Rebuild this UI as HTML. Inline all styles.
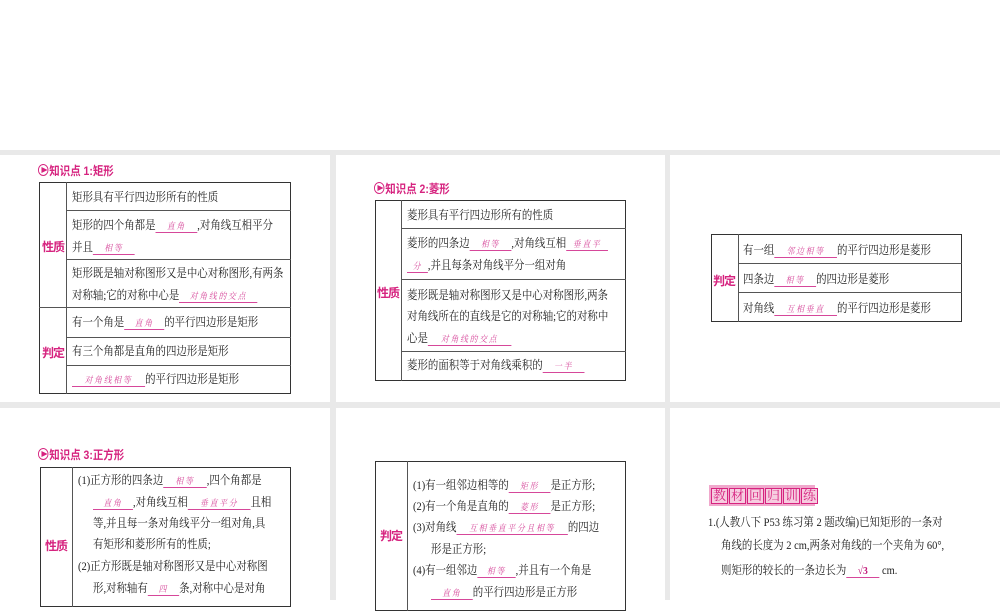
<!DOCTYPE html>
<html><head><meta charset="utf-8"><style>
body{margin:0;width:1000px;height:600px;overflow:hidden;background:#fff;font-family:"Liberation Serif","Noto Serif CJK SC",serif;color:#222;font-size:12px;position:relative}
.bg{position:absolute;left:0;top:150px;width:1000px;height:450px;background:#e9e9e9}
.p{position:absolute;background:#fff}
.box{position:absolute;border:1px solid #333;box-sizing:border-box}
.h{position:absolute;height:1px;background:#555}
.v{position:absolute;width:1px;background:#555}
.t{position:absolute;white-space:nowrap;line-height:14px;font-size:12px;transform:scaleX(0.87);transform-origin:0 0}
.lab{position:absolute;color:#d6237f;font-family:"Liberation Sans","Noto Sans CJK SC",sans-serif;font-weight:bold;font-size:12px;letter-spacing:-1px}
.hd{position:absolute;color:#d6237f;font-family:"Liberation Sans","Noto Sans CJK SC",sans-serif;font-weight:bold;font-size:12px;white-space:nowrap;transform:scaleX(0.87);transform-origin:0 0}
.hd i{display:inline-block;width:12px;height:12px;border-radius:50%;border:1px solid #d6237f;box-sizing:border-box;position:relative;vertical-align:-1px;margin-right:1px}
.hd i:after{content:"";position:absolute;left:3px;top:2px;border-left:7px solid #d6237f;border-top:3.5px solid transparent;border-bottom:3.5px solid transparent}
.a{display:inline-block;border-bottom:1px solid #d6479a;color:#d6479a;font-size:9px;text-align:center;letter-spacing:2px;font-style:italic;line-height:12px}
</style></head><body>
<div class="bg"></div>
<div class="p" style="left:0;top:155px;width:330px;height:247px"></div>
<div class="p" style="left:336px;top:155px;width:329px;height:247px"></div>
<div class="p" style="left:670px;top:155px;width:330px;height:247px"></div>
<div class="p" style="left:0;top:408px;width:330px;height:192px"></div>
<div class="p" style="left:336px;top:408px;width:329px;height:192px"></div>
<div class="p" style="left:670px;top:408px;width:330px;height:192px"></div>

<!-- T1 -->
<div class="hd" style="left:38px;top:162px"><i></i>知识点 1:矩形</div>
<div class="box" style="left:39px;top:182px;width:252px;height:212px"></div>
<div class="v" style="left:66px;top:182px;height:212px"></div>
<div class="h" style="left:66px;top:210px;width:225px"></div>
<div class="h" style="left:66px;top:259px;width:225px"></div>
<div class="h" style="left:39px;top:307px;width:252px"></div>
<div class="h" style="left:66px;top:337px;width:225px"></div>
<div class="h" style="left:66px;top:365px;width:225px"></div>
<div class="lab" style="left:42px;top:238px">性质</div>
<div class="lab" style="left:42px;top:344px">判定</div>
<div class="t" style="left:72px;top:190px">矩形具有平行四边形所有的性质</div>
<div class="t" style="left:72px;top:218px">矩形的四个角都是<span class="a" style="width:48px">直角</span>,对角线互相平分</div>
<div class="t" style="left:72px;top:240px">并且<span class="a" style="width:48px">相等</span></div>
<div class="t" style="left:72px;top:266px">矩形既是轴对称图形又是中心对称图形,有两条</div>
<div class="t" style="left:72px;top:288px">对称轴;它的对称中心是<span class="a" style="width:90px">对角线的交点</span></div>
<div class="t" style="left:72px;top:315px">有一个角是<span class="a" style="width:46px">直角</span>的平行四边形是矩形</div>
<div class="t" style="left:72px;top:344px">有三个角都是直角的四边形是矩形</div>
<div class="t" style="left:72px;top:372px"><span class="a" style="width:84px">对角线相等</span>的平行四边形是矩形</div>

<!-- T2 -->
<div class="hd" style="left:374px;top:180px"><i></i>知识点 2:菱形</div>
<div class="box" style="left:375px;top:200px;width:251px;height:181px"></div>
<div class="v" style="left:401px;top:200px;height:181px"></div>
<div class="h" style="left:401px;top:228px;width:225px"></div>
<div class="h" style="left:401px;top:279px;width:225px"></div>
<div class="h" style="left:401px;top:351px;width:225px"></div>
<div class="lab" style="left:377px;top:284px">性质</div>
<div class="t" style="left:407px;top:208px">菱形具有平行四边形所有的性质</div>
<div class="t" style="left:407px;top:236px">菱形的四条边<span class="a" style="width:48px">相等</span>,对角线互相<span class="a" style="width:48px">垂直平</span></div>
<div class="t" style="left:407px;top:258px"><span class="a" style="width:24px">分</span>,并且每条对角线平分一组对角</div>
<div class="t" style="left:407px;top:288px">菱形既是轴对称图形又是中心对称图形,两条</div>
<div class="t" style="left:407px;top:309px">对角线所在的直线是它的对称轴;它的对称中</div>
<div class="t" style="left:407px;top:331px">心是<span class="a" style="width:96px">对角线的交点</span></div>
<div class="t" style="left:407px;top:358px">菱形的面积等于对角线乘积的<span class="a" style="width:48px">一半</span></div>

<!-- T3 -->
<div class="box" style="left:711px;top:234px;width:251px;height:88px"></div>
<div class="v" style="left:738px;top:234px;height:88px"></div>
<div class="h" style="left:738px;top:263px;width:224px"></div>
<div class="h" style="left:738px;top:292px;width:224px"></div>
<div class="lab" style="left:713px;top:272px">判定</div>
<div class="t" style="left:743px;top:243px">有一组<span class="a" style="width:72px">邻边相等</span>的平行四边形是菱形</div>
<div class="t" style="left:743px;top:272px">四条边<span class="a" style="width:48px">相等</span>的四边形是菱形</div>
<div class="t" style="left:743px;top:301px">对角线<span class="a" style="width:72px">互相垂直</span>的平行四边形是菱形</div>

<!-- T4 -->
<div class="hd" style="left:38px;top:446px"><i></i>知识点 3:正方形</div>
<div class="box" style="left:40px;top:467px;width:251px;height:140px"></div>
<div class="v" style="left:72px;top:467px;height:140px"></div>
<div class="lab" style="left:45px;top:537px">性质</div>
<div class="t" style="left:78px;top:473px">(1)正方形的四条边<span class="a" style="width:50px">相等</span>,四个角都是</div>
<div class="t" style="left:93px;top:495px"><span class="a" style="width:46px">直角</span>,对角线互相<span class="a" style="width:72px">垂直平分</span>且相</div>
<div class="t" style="left:93px;top:516px">等,并且每一条对角线平分一组对角,具</div>
<div class="t" style="left:93px;top:537px">有矩形和菱形所有的性质;</div>
<div class="t" style="left:78px;top:559px">(2)正方形既是轴对称图形又是中心对称图</div>
<div class="t" style="left:93px;top:581px">形,对称轴有<span class="a" style="width:36px">四</span>条,对称中心是对角</div>

<!-- T5 -->
<div class="box" style="left:375px;top:461px;width:251px;height:150px"></div>
<div class="v" style="left:407px;top:461px;height:150px"></div>
<div class="lab" style="left:380px;top:527px">判定</div>
<div class="t" style="left:413px;top:478px">(1)有一组邻边相等的<span class="a" style="width:48px">矩形</span>是正方形;</div>
<div class="t" style="left:413px;top:499px">(2)有一个角是直角的<span class="a" style="width:48px">菱形</span>是正方形;</div>
<div class="t" style="left:413px;top:520px">(3)对角线<span class="a" style="width:128px">互相垂直平分且相等</span>的四边</div>
<div class="t" style="left:431px;top:542px">形是正方形;</div>
<div class="t" style="left:413px;top:563px">(4)有一组邻边<span class="a" style="width:44px">相等</span>,并且有一个角是</div>
<div class="t" style="left:431px;top:585px"><span class="a" style="width:48px">直角</span>的平行四边形是正方形</div>

<!-- section -->
<div style="position:absolute;left:709px;top:485px;width:106px;height:21px;background:#f0a8cc"></div>
<div style="position:absolute;left:711px;top:488px;font-size:13px;line-height:14px;color:#d6237f;white-space:nowrap">
<span style="display:inline-block;width:15px;border:1px solid #d6237f;margin-right:1px;text-align:center;background:#f6cde0">教</span><span style="display:inline-block;width:15px;border:1px solid #d6237f;margin-right:1px;text-align:center;background:#f6cde0">材</span><span style="display:inline-block;width:15px;border:1px solid #d6237f;margin-right:1px;text-align:center;background:#f6cde0">回</span><span style="display:inline-block;width:15px;border:1px solid #d6237f;margin-right:1px;text-align:center;background:#f6cde0">归</span><span style="display:inline-block;width:15px;border:1px solid #d6237f;margin-right:1px;text-align:center;background:#f6cde0">训</span><span style="display:inline-block;width:15px;border:1px solid #d6237f;text-align:center;background:#f6cde0">练</span></div>
<div class="t" style="left:708px;top:515px">1.(人教八下 P53 练习第 2 题改编)已知矩形的一条对</div>
<div class="t" style="left:721px;top:538px">角线的长度为 2 cm,两条对角线的一个夹角为 60°,</div>
<div class="t" style="left:721px;top:563px">则矩形的较长的一条边长为<span class="a" style="width:38px;font-style:normal;font-size:11px;font-weight:bold;color:#c2187a;letter-spacing:0">√3</span> cm.</div>
</body></html>
